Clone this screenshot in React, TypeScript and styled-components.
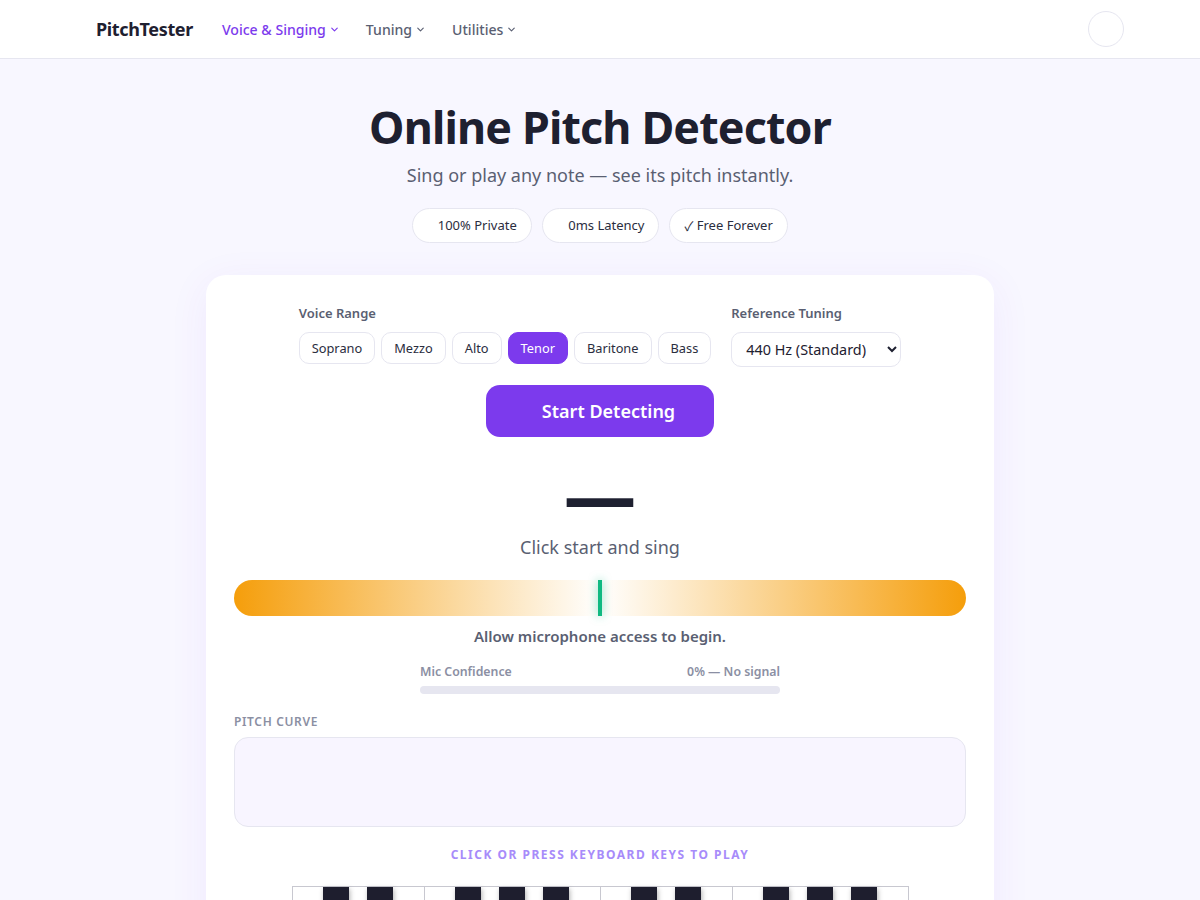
import React from "react";
import styled, { createGlobalStyle } from "styled-components";
import { ChevronDown } from "lucide-react";

const GlobalStyle = createGlobalStyle`
  * { box-sizing: border-box; }
  html, body { margin: 0; padding: 0; }
  body {
    background: #f8f7ff;
    color: #1e2030;
    font-family: "Noto Sans", "Liberation Sans", sans-serif;
  }
`;

const Navbar = styled.nav`
  height: 59px;
  background: #fff;
  border-bottom: 1px solid #e6e6f0;
  display: flex;
  align-items: center;
  padding: 0 76px 0 96px;
`;

const Logo = styled.div`
  font-size: 18px;
  font-weight: 700;
  letter-spacing: -0.36px;
  color: #1e2030;
  margin-right: 29px;
`;

const NavLinks = styled.div`
  display: flex;
  align-items: center;
  gap: 26px;
  flex: 1;
`;

const NavLink = styled.a<{ $active?: boolean }>`
  display: flex;
  align-items: center;
  gap: 3px;
  font-size: 14.08px;
  font-weight: 500;
  color: ${(p) => (p.$active ? "#7c3aed" : "#5a5f72")};
`;

const Avatar = styled.div`
  width: 36px;
  height: 36px;
  border-radius: 50%;
  background: #fff;
  border: 1px solid #e6e6f0;
`;

const Hero = styled.header`
  display: flex;
  flex-direction: column;
  align-items: center;
  padding-top: 36px;
`;

const Title = styled.h1`
  margin: 0;
  font-size: 44.8px;
  line-height: 63px;
  font-weight: 700;
  letter-spacing: -0.85px;
  color: #1e2030;
`;

const Subtitle = styled.p`
  margin: 5px 0 0;
  font-size: 18px;
  line-height: 25px;
  color: #5a5f72;
`;

const Badges = styled.div`
  display: flex;
  gap: 10px;
  margin-top: 20px;
`;

const Badge = styled.span`
  display: flex;
  align-items: center;
  height: 35px;
  padding: 0 14px 1px;
  border-radius: 18px;
  background: #fff;
  border: 1px solid #e6e6f0;
  font-size: 13px;
  color: #2a2d3e;
`;

const BlankIcon = styled.i<{ $w: number }>`
  display: inline-block;
  width: ${(p) => p.$w}px;
`;

const CheckGlyph = styled.span`
  font-family: "Noto Sans CJK SC", "Noto Sans", sans-serif;
`;

const Card = styled.main`
  width: 788px;
  margin: 32px auto 0;
  padding: 28px 28px 32px;
  background: #fff;
  border-radius: 20px;
  box-shadow: 0 8px 40px rgba(124, 58, 237, 0.07);
  display: flex;
  flex-direction: column;
  align-items: center;
`;

const Controls = styled.div`
  display: flex;
  gap: 20px;
  justify-content: center;
`;

const Field = styled.div`
  display: flex;
  flex-direction: column;
  gap: 9px;
`;

const FieldLabel = styled.label`
  font-size: 13px;
  line-height: 20px;
  font-weight: 600;
  color: #5a5f72;
`;

const RangeButtons = styled.div`
  display: flex;
  gap: 6px;
`;

const RangeButton = styled.button<{ $active?: boolean }>`
  height: 32px;
  padding: 0 12px;
  border-radius: 10px;
  font-family: inherit;
  font-size: 12.8px;
  color: ${(p) => (p.$active ? "#fff" : "#2a2d3e")};
  background: ${(p) => (p.$active ? "#7c3aed" : "#fff")};
  border: 1px solid ${(p) => (p.$active ? "#7c3aed" : "#e6e6f0")};
`;

const TuningSelect = styled.select`
  width: 170px;
  height: 35px;
  padding: 0 10px;
  border-radius: 10px;
  border: 1px solid #e6e6f0;
  background: #fff;
  font-family: inherit;
  font-size: 14.4px;
  color: #1e2030;
`;

const StartButton = styled.button`
  display: flex;
  align-items: center;
  justify-content: center;
  width: 228px;
  height: 52px;
  margin-top: 18px;
  border: none;
  border-radius: 14px;
  background: #7c3aed;
  color: #fff;
  font-family: inherit;
  font-size: 18px;
  font-weight: 600;
`;

const NoteDisplay = styled.div`
  margin-top: 16px;
  font-size: 72px;
  line-height: 82px;
  font-weight: 800;
  color: #1e2030;
`;

const Hint = styled.div`
  font-size: 18px;
  line-height: 25px;
  color: #5a5f72;
`;

const CentsBar = styled.div`
  position: relative;
  width: 100%;
  height: 36px;
  margin-top: 20px;
  border-radius: 18px;
  background: linear-gradient(90deg, #f59e0b 0%, #fff 50%, #f59e0b 100%);
`;

const CentsMarker = styled.span`
  position: absolute;
  left: 50%;
  top: 0;
  bottom: 0;
  width: 4px;
  margin-left: -2px;
  background: #10b981;
  box-shadow: 0 0 10px rgba(16, 185, 129, 0.6);
`;

const Status = styled.div`
  margin-top: 9px;
  font-size: 15px;
  line-height: 22px;
  font-weight: 600;
  color: #5a5f72;
`;

const Confidence = styled.div`
  width: 360px;
  margin-top: 17px;
`;

const ConfidenceRow = styled.div`
  display: flex;
  justify-content: space-between;
  font-size: 12.32px;
  line-height: 16px;
  font-weight: 600;
  color: #8b8fa3;
`;

const ConfidenceTrack = styled.div`
  height: 8px;
  margin-top: 6px;
  border-radius: 4px;
  background: #e6e6f0;
`;

const CurveSection = styled.section`
  width: 100%;
  margin-top: 20px;
`;

const CurveLabel = styled.div`
  font-size: 12px;
  line-height: 16px;
  font-weight: 600;
  letter-spacing: 0.65px;
  text-transform: uppercase;
  color: #8b8fa3;
`;

const CurveBox = styled.div`
  height: 90px;
  margin-top: 7px;
  border-radius: 14px;
  background: #f8f5ff;
  border: 1px solid #e6e6f0;
`;

const PianoHint = styled.div`
  margin-top: 20px;
  font-size: 12px;
  line-height: 16px;
  font-weight: 700;
  letter-spacing: 1.5px;
  text-transform: uppercase;
  color: #a78bfa;
`;

const Piano = styled.div`
  position: relative;
  display: flex;
  margin: 23px 0 0 1px;
  border-top: 1px solid #c8c8d0;
  border-right: 1px solid #c8c8d0;
  border-bottom: 1px solid #c8c8d0;
`;

const WhiteKey = styled.div`
  width: 44px;
  height: 130px;
  background: #fff;
  border-left: 1px solid #c8c8d0;
`;

const BlackKey = styled.div`
  position: absolute;
  top: 0;
  width: 26px;
  height: 80px;
  background: #1e1e2e;
  box-shadow: 1px 2px 5px rgba(0, 0, 0, 0.3);
`;

const ranges = ["Soprano", "Mezzo", "Alto", "Tenor", "Baritone", "Bass"];
const whiteKeys = Array.from({ length: 14 }, (_, i) => i);
// white key boundaries that carry a black key
const blackAt = [1, 2, 4, 5, 6, 8, 9, 11, 12, 13];

export default function App() {
  return (
    <>
      <GlobalStyle />
      <Navbar>
        <Logo>PitchTester</Logo>
        <NavLinks>
          <NavLink $active>
            Voice &amp; Singing <ChevronDown size={11} strokeWidth={2.5} />
          </NavLink>
          <NavLink>
            Tuning <ChevronDown size={11} strokeWidth={2.5} />
          </NavLink>
          <NavLink>
            Utilities <ChevronDown size={11} strokeWidth={2.5} />
          </NavLink>
        </NavLinks>
        <Avatar />
      </Navbar>

      <Hero>
        <Title>Online Pitch Detector</Title>
        <Subtitle>Sing or play any note — see its pitch instantly.</Subtitle>
        <Badges>
          <Badge>
            <BlankIcon $w={10.5} />
            100% Private
          </Badge>
          <Badge>
            <BlankIcon $w={11.5} />
            0ms Latency
          </Badge>
          <Badge>
            <CheckGlyph>✓</CheckGlyph>&nbsp;Free Forever
          </Badge>
        </Badges>
      </Hero>

      <Card>
        <Controls>
          <Field>
            <FieldLabel>Voice Range</FieldLabel>
            <RangeButtons>
              {ranges.map((r) => (
                <RangeButton key={r} $active={r === "Tenor"}>
                  {r}
                </RangeButton>
              ))}
            </RangeButtons>
          </Field>
          <Field>
            <FieldLabel>Reference Tuning</FieldLabel>
            <TuningSelect defaultValue="440">
              <option value="440">440 Hz (Standard)</option>
              <option value="432">432 Hz</option>
            </TuningSelect>
          </Field>
        </Controls>

        <StartButton>
          <BlankIcon $w={17} />
          Start Detecting
        </StartButton>

        <NoteDisplay>—</NoteDisplay>
        <Hint>Click start and sing</Hint>

        <CentsBar>
          <CentsMarker />
        </CentsBar>

        <Status>Allow microphone access to begin.</Status>

        <Confidence>
          <ConfidenceRow>
            <span>Mic Confidence</span>
            <span>0% — No signal</span>
          </ConfidenceRow>
          <ConfidenceTrack />
        </Confidence>

        <CurveSection>
          <CurveLabel>Pitch Curve</CurveLabel>
          <CurveBox />
        </CurveSection>

        <PianoHint>Click or press keyboard keys to play</PianoHint>

        <Piano>
          {whiteKeys.map((k) => (
            <WhiteKey key={k} />
          ))}
          {blackAt.map((b) => (
            <BlackKey key={b} style={{ left: b * 44 - 13 }} />
          ))}
        </Piano>
      </Card>
    </>
  );
}
